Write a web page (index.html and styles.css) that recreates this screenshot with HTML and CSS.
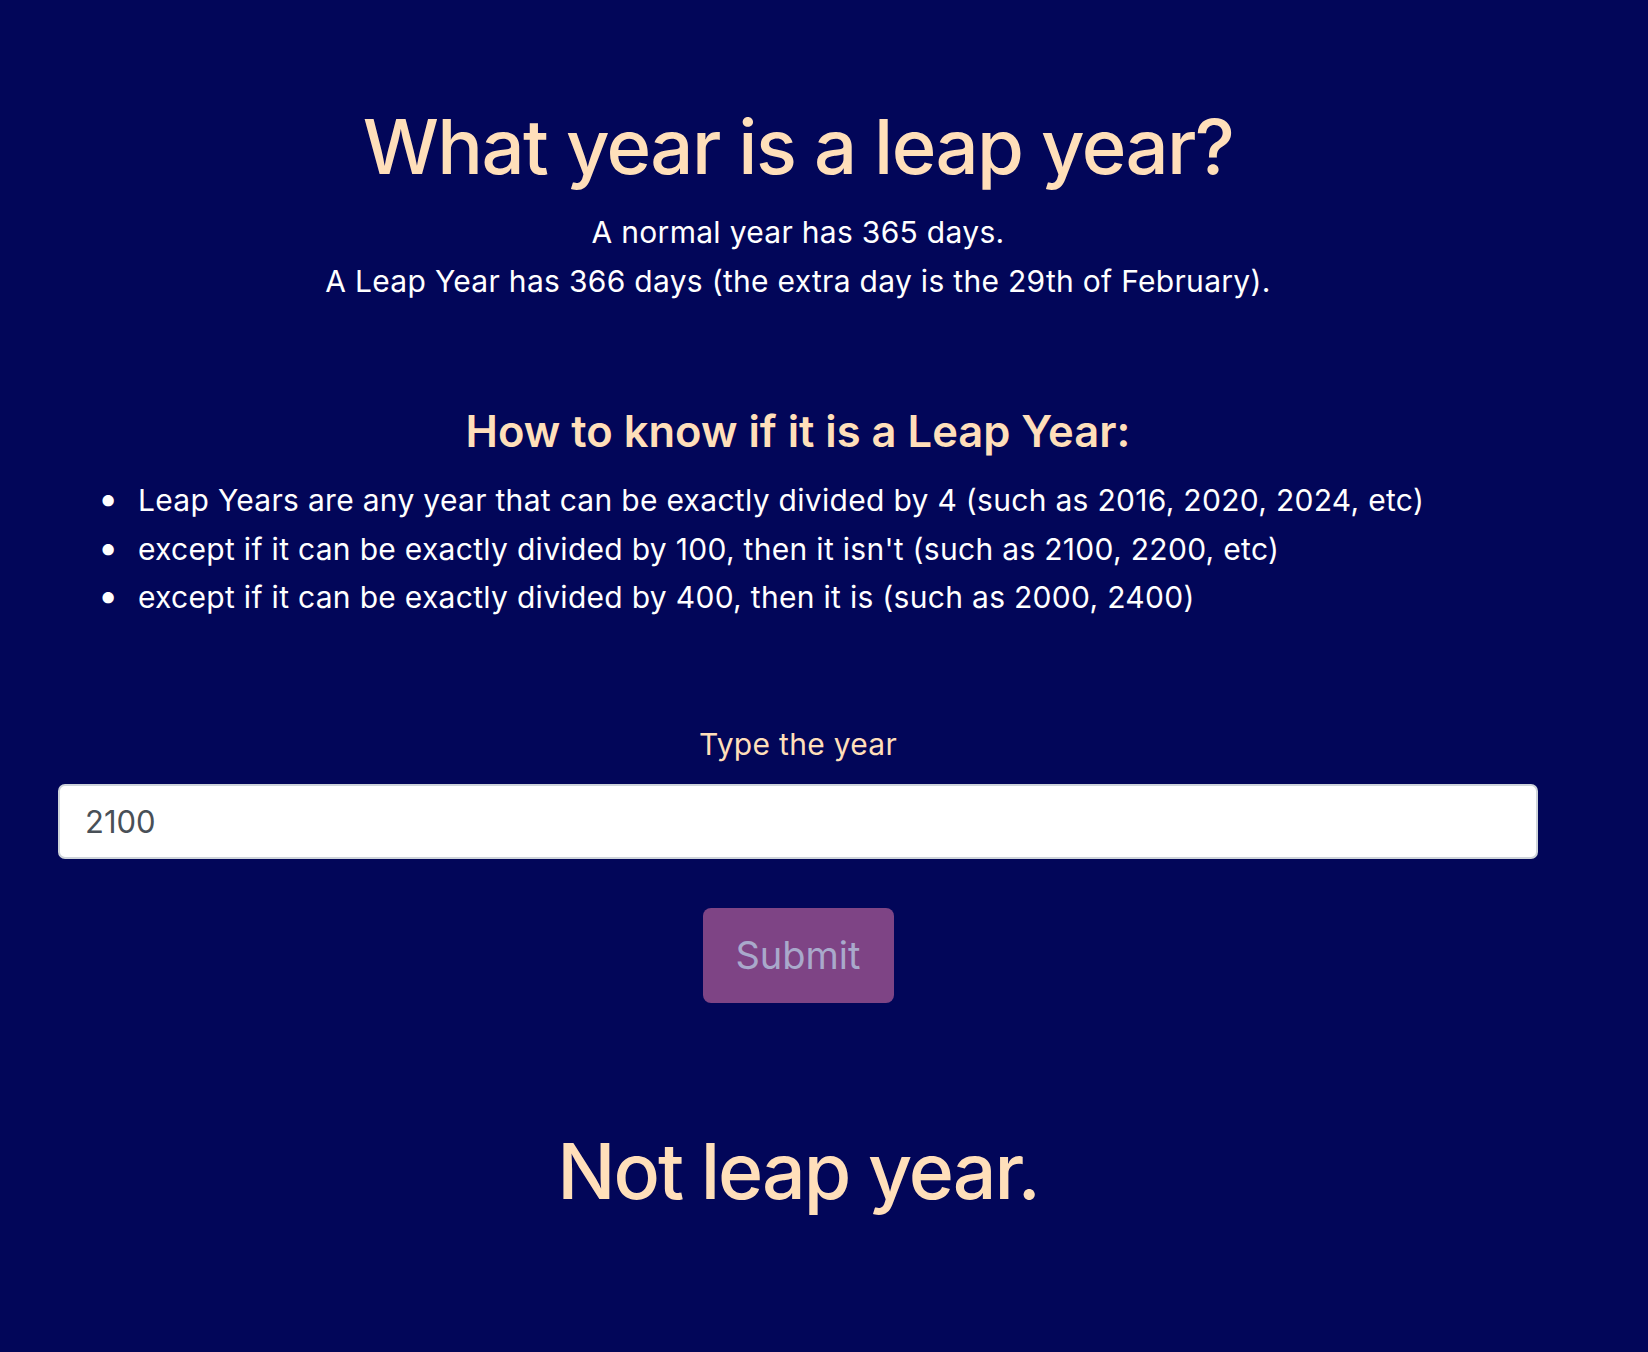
FILE: index.html
```html
<!DOCTYPE html>
<html>
<head>
<meta charset="utf-8">
<link rel="stylesheet" href="styles.css">
</head>
<body>
<main class="page">
  <h1 class="title">What year is a leap year?</h1>
  <p class="intro">A normal year has 365 days.<br>A Leap Year has 366 days (the extra day is the 29th of February).</p>
  <h2 class="subtitle">How to know if it is a Leap Year:</h2>
  <ul class="rules">
    <li>Leap Years are any year that can be exactly divided by 4 (such as 2016, 2020, 2024, etc)</li>
    <li>except if it can be exactly divided by 100, then it isn't (such as 2100, 2200, etc)</li>
    <li>except if it can be exactly divided by 400, then it is (such as 2000, 2400)</li>
  </ul>
  <form class="form">
    <label class="label" for="year">Type the year</label>
    <input class="input" id="year" type="text" value="2100">
    <button class="btn" type="button" disabled>Submit</button>
  </form>
  <p class="result">Not leap year.</p>
</main>
</body>
</html>
```
FILE: styles.css
```css
html, body {
  margin: 0;
  padding: 0;
  background: #020659;
}
body {
  font-family: Inter, "Noto Sans", sans-serif;
  color: #ffffff;
  min-height: 1352px;
}
.page {
  width: 1596px;
  box-sizing: border-box;
  padding: 100px 58px 0;
  text-align: center;
}
.title {
  margin: 0;
  font-size: 76px;
  font-weight: 500;
  line-height: 92px;
  color: #ffdfba;
  letter-spacing: -1.6px;
}
.intro {
  margin: 16px 0 0;
  font-size: 30px;
  line-height: 48.5px;
  letter-spacing: 0.3px;
}
.subtitle {
  margin: 96px 0 0;
  font-size: 43.5px;
  font-weight: 600;
  line-height: 60px;
  color: #ffdfba;
}
.rules {
  margin: 15px 0 0;
  padding-left: 80px;
  list-style: none;
  text-align: left;
  font-size: 30px;
  line-height: 48.5px;
  letter-spacing: 0.3px;
}
.rules li::before {
  content: "\2022";
  display: inline-block;
  width: 40px;
  margin-left: -40px;
  font-size: 36px;
  line-height: 1;
  vertical-align: top;
  padding-top: 4px;
}
.form {
  display: flex;
  flex-direction: column;
  align-items: center;
  margin-top: 102px;
}
.label {
  font-size: 30px;
  line-height: 40px;
  color: #ffdfba;
  letter-spacing: 0.3px;
}
.input {
  margin-top: 20px;
  width: 100%;
  height: 75px;
  box-sizing: border-box;
  border: 2px solid #ced4da;
  border-radius: 7px;
  padding: 0 25px;
  font-family: inherit;
  font-size: 31px;
  color: #495057;
  background: #fff;
}
.btn {
  margin-top: 49px;
  width: 191px;
  height: 95px;
  border: none;
  border-radius: 8px;
  background: #7e4485;
  color: #a9a9cb;
  font-family: inherit;
  font-size: 38px;
}
.result {
  margin: 118px 0 0;
  font-size: 77px;
  font-weight: 500;
  line-height: 100px;
  color: #ffdfba;
  letter-spacing: -2px;
}
```
